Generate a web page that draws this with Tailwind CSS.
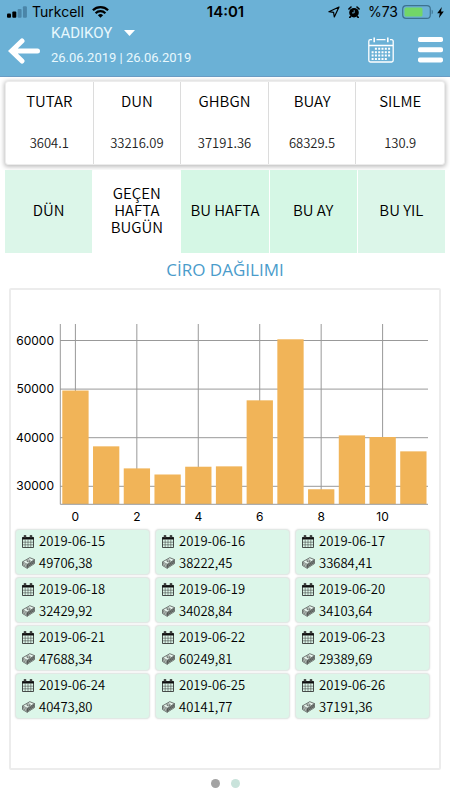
<!DOCTYPE html>
<html lang="tr">
<head>
<meta charset="utf-8">
<meta name="viewport" content="width=device-width, initial-scale=1">
<title>Ciro Dağılımı</title>
<script src="https://cdn.jsdelivr.net/npm/@tailwindcss/browser@4"></script>
</head>
<body class="min-h-screen bg-white text-black font-[350] font-['Noto_Sans_CJK_JP','Open_Sans',sans-serif]">
<svg class="hidden" aria-hidden="true">
  <symbol id="cal" viewBox="0 0 12 13">
    <path d="M0.5 2.5h11v10h-11z" fill="none" stroke="#222" stroke-width="0.8"/>
    <path d="M0.2 2.3h11.6v2.2H0.2z" fill="#111"/>
    <path d="M1.8 0.3h2.4v3H1.8zM7.8 0.3h2.4v3H7.8z" fill="#111"/>
    <path d="M3 0.8v1.8M9 0.8v1.8" stroke="#ccc" stroke-width="0.5"/>
    <path d="M3.2 4.5v8M6 4.5v8M8.8 4.5v8M0.5 7.2h11M0.5 9.8h11" stroke="#333" stroke-width="0.5"/>
  </symbol>
  <symbol id="cash" viewBox="0 0 13 12">
    <path d="M0.6 4.8 7.8 0.7l4.7 1.9v4L5.2 11.3.6 8.6z" fill="#e8f5ee" stroke="#222" stroke-width="0.6" stroke-linejoin="round"/>
    <path d="M5.2 7.2 12.5 2.6v4L5.2 11.3z" fill="#8d9691"/>
    <path d="M0.6 4.8 5.2 7.2l7.3-4.6M5.2 7.2v4.1M0.6 6.1l4.6 2.5 7.3-4.7M0.6 7.4l4.6 2.6 7.3-4.7" fill="none" stroke="#222" stroke-width="0.5"/>
    <ellipse cx="6.5" cy="3.9" rx="1.8" ry="0.9" fill="none" stroke="#222" stroke-width="0.6"/>
  </symbol>
</svg>

<header class="bg-[#6bb1d6] border-b border-[#6a9cc4]">
  <div class="grid grid-cols-[1fr_auto_1fr] items-center h-6 pl-[7px] pr-[6px] font-[Inter,sans-serif] font-normal text-sm">
    <div class="flex items-center">
      <svg class="w-5 h-3" viewBox="0 0 20 12" aria-hidden="true">
        <rect x="0" y="7.5" width="4" height="4.2" rx="1"/><rect x="5.3" y="5.5" width="4" height="6.2" rx="1"/>
        <rect x="10.6" y="3" width="4" height="8.7" rx="1" fill="#4a85a8"/><rect x="15.9" y="0.3" width="4" height="11.4" rx="1" fill="#4a85a8"/>
      </svg>
      <span class="ml-[5px]">Turkcell</span>
      <svg class="ml-2 w-[17px] h-3" viewBox="0 0 17 12" fill="none" stroke="#000" stroke-width="2.2" aria-hidden="true">
        <path d="M0.9 4.3a10.8 10.8 0 0 1 15.2 0"/><path d="M3.6 7.2a7 7 0 0 1 9.8 0"/>
        <path d="M8.5 11.8 5.9 9.2a3.7 3.7 0 0 1 5.2 0z" fill="#000" stroke="none"/>
      </svg>
    </div>
    <span class="font-semibold text-[15px]">14:01</span>
    <div class="flex items-center justify-end">
      <svg class="w-3 h-3" viewBox="0 0 12 12" fill="none" stroke="#000" stroke-width="1.2" stroke-linejoin="round" aria-hidden="true"><path d="M11 1 0.9 5.7l4.7.6.7 4.7z"/></svg>
      <svg class="ml-2 w-3 h-3" viewBox="0 0 12 12" aria-hidden="true">
        <circle cx="6" cy="6.7" r="4.8"/><path d="M0.9 3 3 1M11.1 3 9 1M2.6 10.6l-.8.8M9.4 10.6l.8.8" stroke="#000" stroke-width="1.6" stroke-linecap="round"/>
        <path d="M6.2 4.2v2.7H4" fill="none" stroke="#6bb1d6" stroke-width="0.9"/>
      </svg>
      <span class="ml-2">%73</span>
      <svg class="ml-1 w-8 h-[14px]" viewBox="0 0 32 14" aria-hidden="true">
        <rect x="0.7" y="0.7" width="27.6" height="12.6" rx="3.4" fill="none" stroke="#3d7290" stroke-width="1.2"/>
        <rect x="2.5" y="2.5" width="18" height="9" rx="1.6" fill="#72d668"/><path d="M29.7 4.7v4.6c1.5-.5 1.5-4.1 0-4.6z" fill="#3d7290"/>
      </svg>
      <svg class="ml-[3px] w-[7px] h-[11px]" viewBox="0 0 7 11" aria-hidden="true"><path d="M4.8 0 0.2 6.2h2.6L2 11l4.8-6.5H4z"/></svg>
    </div>
  </div>
  <div class="flex items-center h-[52px] pl-2 pr-[7px] text-white">
    <button type="button" aria-label="Geri" class="shrink-0">
      <svg class="w-8 h-[28px]" viewBox="0 0 32 28" fill="none" stroke="#fff" stroke-width="5" stroke-linecap="round" stroke-linejoin="miter"><path d="M29.5 15H4M14 5 3.6 15 14 25"/></svg>
    </button>
    <div class="ml-[11px] grow self-start font-[Roboto,sans-serif] font-normal text-[#e8f8fd]">
      <button type="button" class="flex items-center h-[18px] text-[15px]">KADIKOY
        <svg class="ml-3 w-[11px] h-[6px]" viewBox="0 0 11 6" fill="#fff" aria-hidden="true"><path d="M0 0h11L5.5 6z"/></svg>
      </button>
      <p class="mt-[7px] h-[18px] leading-[18px] text-[13px]">26.06.2019 | 26.06.2019</p>
    </div>
    <button type="button" aria-label="Takvim" class="shrink-0">
      <svg class="w-[26px] h-[26px]" viewBox="0 0 26 26" fill="none" stroke="#fff" stroke-width="1.2">
        <path d="M4 2.7H2.4C1.4 2.7.8 3.3.8 4.3v19c0 1 .6 1.7 1.6 1.7h21.2c1 0 1.6-.7 1.6-1.7v-19c0-1-.6-1.6-1.6-1.6H22M8.5 2.7h9M0.8 8.5h24.4" stroke-width="1.3"/>
        <path d="M6.2 0.5v4.7M19.8 0.5v4.7" stroke-width="1.6"/>
        <path d="M6.9 11.8h15.3M3.6 15.2h18.6M3.6 18.6h18.6M3.6 22h15.3" stroke-width="2" stroke-dasharray="2 1.3"/>
      </svg>
    </button>
    <button type="button" aria-label="Menü" class="ml-6 shrink-0">
      <svg class="w-[25px] h-[26px]" viewBox="0 0 25 26" fill="#fff"><rect width="25" height="5" rx="1.8"/><rect y="10.2" width="25" height="5" rx="1.8"/><rect y="20.4" width="25" height="5" rx="1.8"/></svg>
    </button>
  </div>
</header>

<main class="px-[5px] pt-1">
  <dl class="grid grid-cols-5 h-[84px] rounded-[3px] border border-[#ececec] bg-white divide-x divide-[#dcdcdc] text-center shadow-[0_1px_4px_1px_rgba(0,0,0,0.25)]">
    <div class="pt-[7px]"><dt class="text-[15px] leading-6">TUTAR</dt><dd class="mt-5 text-[13px] leading-5 text-[#222]">3604.1</dd></div>
    <div class="pt-[7px]"><dt class="text-[15px] leading-6">DUN</dt><dd class="mt-5 text-[13px] leading-5 text-[#222]">33216.09</dd></div>
    <div class="pt-[7px]"><dt class="text-[15px] leading-6">GHBGN</dt><dd class="mt-5 text-[13px] leading-5 text-[#222]">37191.36</dd></div>
    <div class="pt-[7px]"><dt class="text-[15px] leading-6">BUAY</dt><dd class="mt-5 text-[13px] leading-5 text-[#222]">68329.5</dd></div>
    <div class="pt-[7px]"><dt class="text-[15px] leading-6">SILME</dt><dd class="mt-5 text-[13px] leading-5 text-[#222]">130.9</dd></div>
  </dl>

  <nav class="mt-[5px] grid grid-cols-5 gap-px h-[83px] text-[15px] leading-[17px]">
    <button type="button" class="pb-1 bg-[#dcf6e9]">DÜN</button>
    <button type="button" class="pb-1 bg-white px-3">GEÇEN HAFTA BUGÜN</button>
    <button type="button" class="pb-1 bg-[#d5f7e5]">BU HAFTA</button>
    <button type="button" class="pb-1 bg-[#d5f7e5]">BU AY</button>
    <button type="button" class="pb-1 bg-[#dcf6e9]">BU YIL</button>
  </nav>

  <h1 class="mt-1 h-[26px] text-center font-['Open_Sans',sans-serif] font-normal text-[17px] leading-[26px] text-[#4a9ccb]">CİRO DAĞILIMI</h1>

  <section class="mt-[5px] mx-1 min-h-[482px] rounded-[2px] border-2 border-[#ececec] bg-white pt-[26px] pl-1 pr-[9px]">
    <svg id="chart" class="block w-full" viewBox="15 316 415 210" role="img" aria-label="Ciro dağılımı grafiği" font-family="Inter, sans-serif" font-size="12" font-weight="400"></svg>
    <ul id="days" class="mt-[3px] grid grid-cols-3 gap-x-[5px] gap-y-[2px] text-[13px] leading-5"></ul>
  </section>

  <div class="mt-[9px] flex justify-center gap-[11px]">
    <button type="button" aria-label="Sayfa 1" class="size-[9px] rounded-full bg-[#a3a3a3]"></button>
    <button type="button" aria-label="Sayfa 2" class="size-[9px] rounded-full bg-[#c9e3db]"></button>
  </div>
</main>

<script>
const amounts = [49706.38, 38222.45, 33684.41, 32429.92, 34028.84, 34103.64, 47688.34, 60249.81, 29389.69, 40473.80, 40141.77, 37191.36];
const y = v => 340.5 - (v - 60000) * 0.00486;
const slot = 30.72;
let s = '';
for (const v of [30000, 40000, 50000, 60000]) {
  s += `<path d="M60 ${y(v)}H428" stroke="#999"/><text x="54" y="${y(v) + 4}" text-anchor="end">${v}</text>`;
}
for (let i = 0; i < 12; i += 2) {
  const x = 75.4 + slot * i;
  s += `<path d="M${x} 324V504" stroke="#999"/><text x="${x}" y="521" text-anchor="middle">${i}</text>`;
}
amounts.forEach((v, i) => {
  const t = y(v);
  s += `<rect x="${62.3 + slot * i}" y="${t}" width="26.3" height="${504 - t}" fill="#f1b458"/>`;
});
s += '<path d="M60.3 324V504.3H428" fill="none" stroke="#999"/>';
document.getElementById('chart').innerHTML = s;

document.getElementById('days').innerHTML = amounts.map((v, i) => `
  <li class="h-[46px] rounded-[4px] border border-[#e2e8e5] bg-[#dcf6e9] pl-[6px] shadow-[0_0_2px_rgba(0,0,0,0.12)]">
    <div class="flex items-center gap-[5px] h-[22px]"><svg class="w-3 h-[13px]" aria-hidden="true"><use href="#cal"/></svg><time>2019-06-${15 + i}</time></div>
    <div class="flex items-center gap-1 h-[22px]"><svg class="w-[13px] h-3" aria-hidden="true"><use href="#cash"/></svg><span>${v.toFixed(2).replace('.', ',')}</span></div>
  </li>`).join('');
</script>
</body>
</html>
